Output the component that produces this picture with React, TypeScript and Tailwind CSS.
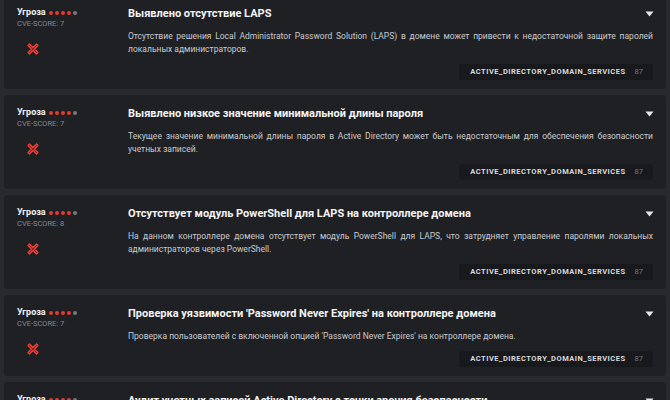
import React from 'react'

interface Threat {
  id: number
  score: number
  level: number
  title: string
  description: string
  service: string
  count: number
}

const threats: Threat[] = [
  {
    id: 1,
    score: 7,
    level: 4,
    title: 'Выявлено отсутствие LAPS',
    description:
      'Отсутствие решения Local Administrator Password Solution (LAPS) в домене может привести к недостаточной защите паролей локальных администраторов.',
    service: 'ACTIVE_DIRECTORY_DOMAIN_SERVICES',
    count: 87,
  },
  {
    id: 2,
    score: 7,
    level: 4,
    title: 'Выявлено низкое значение минимальной длины пароля',
    description:
      'Текущее значение минимальной длины пароля в Active Directory может быть недостаточным для обеспечения безопасности учетных записей.',
    service: 'ACTIVE_DIRECTORY_DOMAIN_SERVICES',
    count: 87,
  },
  {
    id: 3,
    score: 8,
    level: 4,
    title: 'Отсутствует модуль PowerShell для LAPS на контроллере домена',
    description:
      'На данном контроллере домена отсутствует модуль PowerShell для LAPS, что затрудняет управление паролями локальных администраторов через PowerShell.',
    service: 'ACTIVE_DIRECTORY_DOMAIN_SERVICES',
    count: 87,
  },
  {
    id: 4,
    score: 7,
    level: 4,
    title: "Проверка уязвимости 'Password Never Expires' на контроллере домена",
    description: "Проверка пользователей с включенной опцией 'Password Never Expires' на контроллере домена.",
    service: 'ACTIVE_DIRECTORY_DOMAIN_SERVICES',
    count: 87,
  },
  {
    id: 5,
    score: 7,
    level: 4,
    title: 'Аудит учетных записей Active Directory с точки зрения безопасности',
    description: 'Проверка учетных записей Active Directory на соответствие требованиям безопасности.',
    service: 'ACTIVE_DIRECTORY_DOMAIN_SERVICES',
    count: 87,
  },
]

function CrossIcon() {
  return (
    <svg width="12" height="12" viewBox="0 0 12 12">
      <path
        d="M2.5 1 L6 4.5 L9.5 1 L11 2.5 L7.5 6 L11 9.5 L9.5 11 L6 7.5 L2.5 11 L1 9.5 L4.5 6 L1 2.5 Z"
        fill="#8f1d1d"
        stroke="#e8433b"
        strokeWidth="1.3"
        strokeLinejoin="round"
      />
    </svg>
  )
}

function ThreatCard({ t }: { t: Threat }) {
  return (
    <div className="flex rounded-[3px] bg-[#1f2024] pt-[12px] pb-[9px] pl-[13px] pr-[13px]">
      <div className="w-[111px] shrink-0">
        <div className="flex items-center h-[11px]">
          <span className="text-[9px] font-bold text-[#f2f2f2] leading-[11px]">Угроза</span>
          <span className="flex gap-[2px] ml-[3px]">
            {[0, 1, 2, 3, 4].map((i) => (
              <span
                key={i}
                className={`w-[4px] h-[4px] rounded-full ${i < t.level ? 'bg-[#e5392f]' : 'bg-[#77787c]'}`}
              />
            ))}
          </span>
        </div>
        <div className="text-[7.5px] text-[#86878b] leading-[10px] mt-[1px]">CVE-SCORE: {t.score}</div>
        <div className="mt-[14px] ml-[10px]">
          <CrossIcon />
        </div>
      </div>
      <div className="flex-1 min-w-0">
        <div className="flex items-center justify-between h-[14px]">
          <span className="text-[11px] font-bold text-[#f4f4f4] leading-[14px]">{t.title}</span>
          <svg width="9" height="6" viewBox="0 0 9 6" className="mr-[-1px]">
            <path d="M0.5 0.5 H8.5 L4.5 5.5 Z" fill="#e6e6e6" />
          </svg>
        </div>
        <p className="mt-[9px] text-[8.5px] leading-[13px] text-[#c9cacd] text-justify">{t.description}</p>
        <div className="flex justify-end mt-[8px]">
          <div className="flex items-center h-[16px] bg-[#18191c] rounded-[2px] pl-[11px] pr-[10px] gap-[9px]">
            <span className="text-[7.5px] font-bold tracking-[0.5px] text-[#d8d9dc]">{t.service}</span>
            <span className="text-[7.5px] text-[#76777b]">{t.count}</span>
          </div>
        </div>
      </div>
    </div>
  )
}

export default function App() {
  return (
    <div
      className="w-[670px] h-[400px] overflow-hidden bg-[#292a2e] px-[4px]"
      style={{ fontFamily: 'Roboto, "Liberation Sans", sans-serif' }}
    >
      <div className="flex flex-col gap-[6px] -mt-[5px]">
        {threats.map((t) => (
          <ThreatCard key={t.id} t={t} />
        ))}
      </div>
    </div>
  )
}
